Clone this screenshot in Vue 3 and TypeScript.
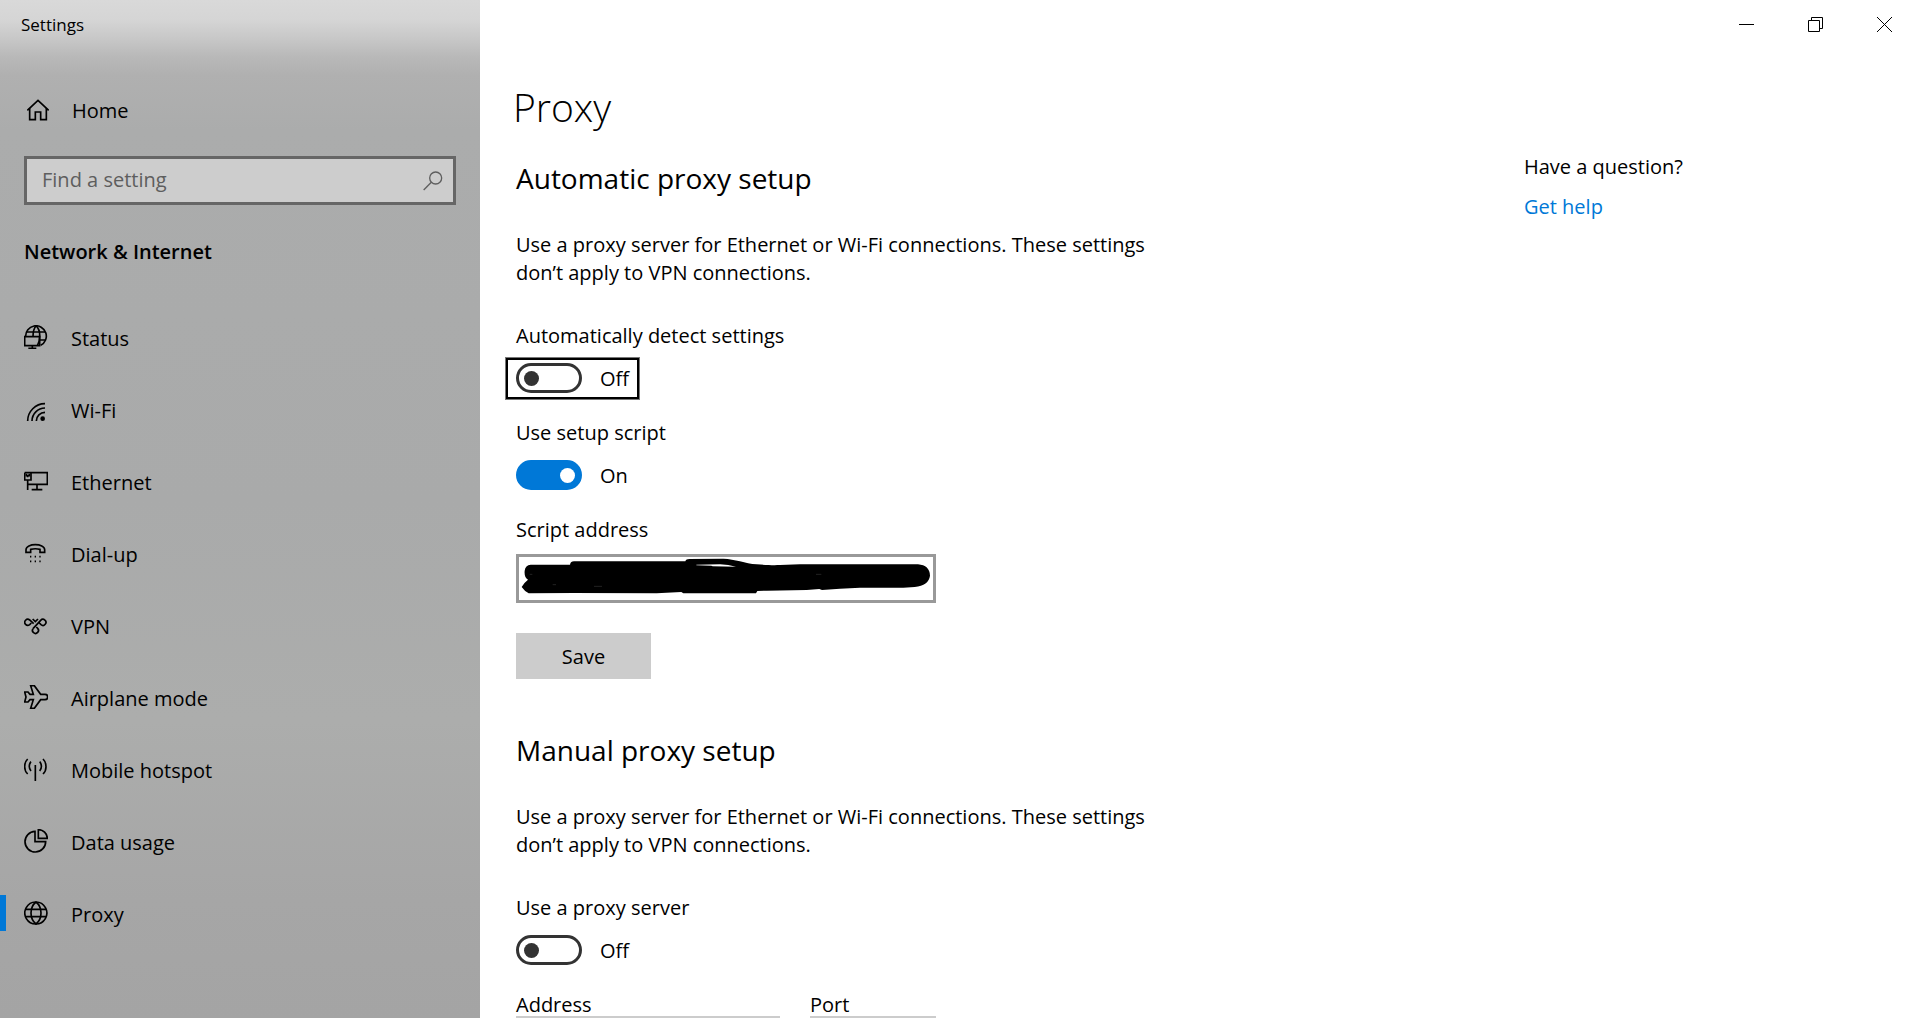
<script setup lang="ts">
import { ref } from 'vue'

interface NavItem {
  id: string
  label: string
}

const navItems: NavItem[] = [
  { id: 'status', label: 'Status' },
  { id: 'wifi', label: 'Wi-Fi' },
  { id: 'ethernet', label: 'Ethernet' },
  { id: 'dialup', label: 'Dial-up' },
  { id: 'vpn', label: 'VPN' },
  { id: 'airplane', label: 'Airplane mode' },
  { id: 'hotspot', label: 'Mobile hotspot' },
  { id: 'data', label: 'Data usage' },
  { id: 'proxy', label: 'Proxy' },
]

const icons: Record<string, string[]> = {
  status: [
    'M5 35 A31 31 0 1 1 50 61',
    'M9 21 H63 M47 45 H65',
    'M27 35 C27 20 31 8 36 2 C44 10 48 22 47 35 C47 46 45 54 40 62',
    'M2 35 H47 V62 H2 Z',
    'M25 62 V70 M13 70 H37',
  ],
  wifi: ['M11 72 A52 52 0 0 1 63 20', 'M24 72 A39 39 0 0 1 63 33', 'M37 72 A26 26 0 0 1 63 46'],
  ethernet: [
    'M2 11 H70 V46 H11',
    'M2 11 V33 H21 V11',
    'M11 33 V63',
    'M7 14 V20 H16 V14 M11 20 V25',
    'M39 46 V62 M23 62 H55',
  ],
  dialup: ['M6 26 C6 6 62 6 62 26 V34 H48 V25 C40 23 28 23 20 25 V34 H6 Z'],
  vpn: [
    'M22 30 L17 35 A9 9 0 1 1 17 21 L29 32',
    'M26 18 L34 26 L42 18',
    'M27 47 L50 22 A9 9 0 1 1 51 35 L46 30',
    'M27 47 A9 9 0 1 0 41 46 L37 42',
  ],
  airplane: [
    'M20 2 H31 L50 28 H63 A8 8 0 0 1 63 44 H50 L31 70 H20 L28 44 H18 L12 51 H2 L6 36 L2 21 H12 L18 28 H28 Z',
  ],
  hotspot: [
    'M34 24 V72',
    'M11 6 C-1 18 -1 40 11 51',
    'M57 6 C69 18 69 40 57 51',
    'M21 14 C14 22 14 34 21 42',
    'M47 14 C54 22 54 34 47 42',
  ],
  data: ['M33 7 A31 31 0 1 0 65 38 H33 Z', 'M43 2 A27 27 0 0 1 70 28 H43 Z'],
  proxy: [
    'M36 3 A33 33 0 1 1 35 3 Z',
    'M36 3 C16 19 16 53 36 69 C56 53 56 19 36 3',
    'M5 25 H67 M5 47 H67',
  ],
}

const search = ref('')
const autoDetect = ref(false)
const useScript = ref(true)
const useProxy = ref(false)
const scriptAddress = ref('')
const address = ref('')
const port = ref('')
</script>

<template>
  <div class="window">
    <aside class="sidebar">
      <div class="app-name">Settings</div>
      <a class="home" href="#home">
        <svg viewBox="0 0 66 64" width="22" height="22" aria-hidden="true">
          <path d="M1 33 L33 3 L65 33" />
          <path d="M8 27 V61 H25 V38 H41 V61 H58 V27" />
        </svg>
        <span>Home</span>
      </a>
      <div class="search">
        <input v-model="search" type="text" placeholder="Find a setting" aria-label="Find a setting" />
        <svg viewBox="0 0 60 60" width="20" height="20" aria-hidden="true">
          <circle cx="38" cy="21" r="18" />
          <path d="M25 34 L2 57" />
        </svg>
      </div>
      <h2 class="group">Network &amp; Internet</h2>
      <nav class="nav">
        <a
          v-for="item in navItems"
          :key="item.id"
          :href="'#' + item.id"
          :class="{ current: item.id === 'proxy' }"
        >
          <svg viewBox="0 0 72 72" width="24" height="24" aria-hidden="true">
            <path v-for="d in icons[item.id]" :key="d" :d="d" />
            <circle v-if="item.id === 'wifi'" class="solid" cx="56" cy="65" r="7" />
            <path
              v-if="item.id === 'dialup'"
              class="dots"
              d="M18 47 h4 M32 47 h4 M46 47 h4 M18 61 h4 M32 61 h4 M46 61 h4"
            />
          </svg>
          <span>{{ item.label }}</span>
        </a>
      </nav>
    </aside>

    <main class="main">
      <div class="caption">
        <button type="button" aria-label="Minimize">
          <svg viewBox="0 0 15 15" width="15" height="15"><path d="M0 7.5 H15" /></svg>
        </button>
        <button type="button" aria-label="Restore">
          <svg viewBox="0 0 15 15" width="15" height="15">
            <path d="M0.5 3.5 H11.5 V14.5 H0.5 Z M3.5 3.5 V0.5 H14.5 V11.5 H11.5" />
          </svg>
        </button>
        <button type="button" aria-label="Close">
          <svg viewBox="0 0 15 15" width="15" height="15"><path d="M0 0 L15 15 M15 0 L0 15" /></svg>
        </button>
      </div>

      <div class="columns">
        <div class="content">
          <h1>Proxy</h1>

          <section>
            <h2>Automatic proxy setup</h2>
            <p>
              Use a proxy server for Ethernet or Wi-Fi connections. These settings don’t apply to VPN
              connections.
            </p>
            <label class="label first" for="auto">Automatically detect settings</label>
            <div class="toggle focused">
              <input id="auto" v-model="autoDetect" type="checkbox" role="switch" />
              <span>{{ autoDetect ? 'On' : 'Off' }}</span>
            </div>
            <label class="label" for="script">Use setup script</label>
            <div class="toggle">
              <input id="script" v-model="useScript" type="checkbox" role="switch" />
              <span>{{ useScript ? 'On' : 'Off' }}</span>
            </div>
            <label class="label" for="script-address">Script address</label>
            <div class="script-field">
              <input id="script-address" v-model="scriptAddress" type="text" />
              <svg class="redaction" viewBox="78 42 1260 147" aria-hidden="true">
                <path
                  d="M104 92 Q106 75 122 74 L240 74 Q242 64 252 64 L586 64 Q588 57 598 57 L700 56 C735 57 765 70 800 73 C830 75 850 76 870 75 L930 73 L1284 73 Q1319 76 1320 107 Q1316 136 1274 141 L1240 143 L1110 143 L1050 146 L996 150 L988 147 L950 150 L830 152 L802 153 L798 160 L580 160 L574 156 L500 160 L250 159 L116 160 Q104 154 95 141 Q100 130 114 119 Q102 112 104 92 Z"
                />
                <path class="gap" d="M619 74 L690 73 Q715 74 738 80 L668 79 L664 77 L619 76 Z" />
                <path class="fleck" d="M119 103 h8 M188 134 h10 M312 139 h24 M978 103 h16" />
              </svg>
            </div>
            <button class="save" type="button">Save</button>
          </section>

          <section class="manual">
            <h2>Manual proxy setup</h2>
            <p>
              Use a proxy server for Ethernet or Wi-Fi connections. These settings don’t apply to VPN
              connections.
            </p>
            <label class="label first" for="proxy-on">Use a proxy server</label>
            <div class="toggle">
              <input id="proxy-on" v-model="useProxy" type="checkbox" role="switch" />
              <span>{{ useProxy ? 'On' : 'Off' }}</span>
            </div>
            <div class="fields">
              <div class="field address">
                <label for="address">Address</label>
                <input id="address" v-model="address" type="text" disabled />
              </div>
              <div class="field port">
                <label for="port">Port</label>
                <input id="port" v-model="port" type="text" disabled />
              </div>
            </div>
          </section>
        </div>

        <aside class="help">
          <div>Have a question?</div>
          <a href="#help">Get help</a>
        </aside>
      </div>
    </main>
  </div>
</template>

<style>
body {
  margin: 0;
  background: #fff;
}
</style>

<style scoped>
* {
  box-sizing: border-box;
}
.window {
  display: flex;
  height: 100vh;
  overflow: hidden;
  background: #fff;
  color: #000;
  font-family: 'Open Sans', 'Noto Sans', sans-serif;
  font-size: 20px;
  line-height: 28px;
}
h1,
h2,
p {
  margin: 0;
  font-weight: 400;
}
a {
  color: inherit;
  text-decoration: none;
}
input,
button {
  font: inherit;
  color: inherit;
  margin: 0;
  border-radius: 0;
}
svg {
  flex: none;
  fill: none;
  stroke: #000;
}

/* Sidebar */
.sidebar {
  flex: 0 0 480px;
  padding: 13px 24px 0;
  background: linear-gradient(
    #d9d9d9 0,
    #d5d5d5 20px,
    #c8c8c8 38px,
    #b9b9b9 56px,
    #b0b0b0 75px,
    #abacac 130px,
    #a9aaaa 500px,
    #acadac 720px,
    #a6a6a6 900px,
    #a4a4a4 100%
  );
}
.app-name {
  margin-left: -3px;
  font-size: 17px;
  line-height: 24px;
}
.home {
  display: flex;
  align-items: center;
  gap: 23px;
  margin-top: 58px;
  padding-left: 3px;
}
.home span {
  padding-top: 2px;
}
.home svg {
  stroke-width: 5;
}
.search {
  display: flex;
  align-items: center;
  height: 49px;
  margin-top: 31px;
  padding: 0 10px 0 15px;
  border: 3px solid #666;
  background: #cdcdcd;
}
.search input {
  flex: 1;
  min-width: 0;
  padding: 0 0 2px;
  border: 0;
  outline: 0;
  background: none;
}
.search input::placeholder {
  color: #5e5e5e;
  opacity: 1;
}
.search svg {
  stroke: #5e5e5e;
  stroke-width: 4;
}
.group {
  margin-top: 33px;
  font-size: 20px;
  font-weight: 600;
}
.nav {
  margin: 35px -24px 0;
}
.nav a {
  display: flex;
  align-items: center;
  gap: 23px;
  height: 72px;
  padding-left: 24px;
  position: relative;
}
.nav span {
  padding-top: 3px;
}
.nav svg {
  stroke-width: 5;
}
.nav .solid {
  fill: #000;
  stroke: none;
}
.current::before {
  content: '';
  position: absolute;
  left: 0;
  top: 18px;
  width: 6px;
  height: 36px;
  background: #0078d7;
}

/* Main area */
.main {
  flex: 1;
  min-width: 0;
}
.caption {
  display: flex;
  justify-content: flex-end;
  gap: 16px;
  height: 49px;
}
.caption button {
  display: flex;
  align-items: center;
  justify-content: center;
  width: 53px;
  padding: 0;
  border: 0;
  background: none;
}
.columns {
  display: grid;
  grid-template-columns: minmax(0, 1fr) 387px;
  padding-left: 36px;
}
h1 {
  margin: 30px 0 0 -3px;
  font-size: 39px;
  font-weight: 300;
  line-height: 56px;
}
section h2 {
  margin-top: 23px;
  font-size: 28px;
  line-height: 40px;
}
section.manual h2 {
  margin-top: 51px;
}
p {
  max-width: 640px;
  margin-top: 33px;
}
.label {
  display: block;
  width: fit-content;
  margin-top: 19px;
}
.label.first {
  margin-top: 35px;
}
.toggle {
  display: flex;
  align-items: flex-start;
  gap: 18px;
  width: fit-content;
  height: 43px;
  margin: 7px 0 0 -11px;
  padding: 3px 8px 4px;
  border: 3px solid transparent;
}
.toggle.focused {
  border-color: #000;
  outline: 1px solid #777;
  outline-offset: -1px;
}
.toggle span {
  padding-top: 2px;
}
.toggle input {
  display: flex;
  align-items: center;
  appearance: none;
  width: 66px;
  height: 30px;
  padding: 0 5px;
  border: 3px solid #333;
  border-radius: 15px;
}
.toggle input::before {
  content: '';
  width: 15px;
  height: 15px;
  border-radius: 50%;
  background: #333;
}
.toggle input:checked {
  justify-content: flex-end;
  padding-right: 4px;
  border-color: #0078d7;
  background: #0078d7;
}
.toggle input:checked::before {
  background: #fff;
}
.script-field {
  position: relative;
  width: 420px;
  height: 49px;
  margin-top: 10px;
}
.script-field input {
  width: 100%;
  height: 100%;
  padding: 0 12px;
  border: 3px solid #999;
}
.redaction {
  position: absolute;
  left: 0;
  top: 0;
  width: 100%;
  height: 100%;
  fill: #000;
  stroke: none;
  pointer-events: none;
}
.redaction .gap {
  fill: #fff;
}
.redaction .fleck {
  stroke: #666;
  stroke-width: 1;
}
.save {
  display: block;
  width: 135px;
  height: 46px;
  margin-top: 30px;
  padding: 2px 0 0;
  border: 0;
  background: #ccc;
}
.fields {
  display: flex;
  gap: 30px;
  width: 420px;
  margin-top: 22px;
  line-height: 22px;
}
.field label {
  display: block;
}
.field input {
  display: block;
  width: 100%;
  height: 49px;
  border: 3px solid #ccc;
  background: #fff;
}
.address {
  flex: 1;
}
.port {
  width: 126px;
}
.help {
  padding-top: 104px;
}
.help a {
  display: inline-block;
  margin-top: 12px;
  color: #0078d7;
}
</style>
